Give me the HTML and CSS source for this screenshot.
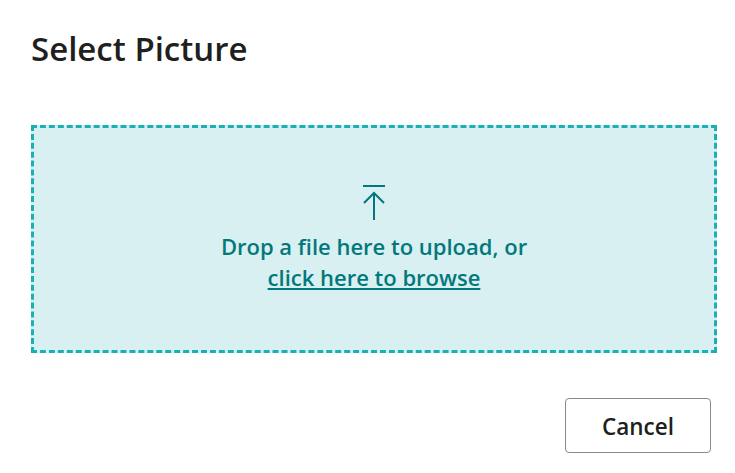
FILE: index.html
```html
<!DOCTYPE html>
<html lang="en">
  <head>
    <meta charset="UTF-8" />
    <meta name="viewport" content="width=device-width, initial-scale=1.0" />
    <title>Select Picture</title>
    <link rel="stylesheet" href="styles.css">
  </head>
  <body>
    <div class="dialog">
      <h2 class="dialog-title">Select Picture</h2>

      <div class="drop-zone">
        <svg class="upload-icon" width="24" height="36" viewBox="0 0 24 36">
          <line x1="1" y1="1" x2="23" y2="1" stroke="currentColor" stroke-width="2" />
          <line x1="12" y1="8" x2="12" y2="35" stroke="currentColor" stroke-width="2" />
          <polyline points="2,18 12,8 22,18" fill="none" stroke="currentColor" stroke-width="2" />
        </svg>
        <p class="drop-text">Drop a file here to upload, or</p>
        <a href="#" class="browse-link">click here to browse</a>
      </div>

      <div class="actions">
        <button type="button" class="btn-cancel">Cancel</button>
      </div>
    </div>
  </body>
</html>
```

FILE: styles.css
```css
/* General styles */
body {
  font-family: "Open Sans", "Noto Sans", sans-serif;
  background-color: white;
  margin: 0;
  padding: 0;
}

.dialog {
  padding: 27px 18px 20px 31px;
}

.dialog-title {
  margin: 0;
  font-size: 33px;
  font-weight: 600;
  line-height: 44px;
  color: #201f1e;
}

.drop-zone {
  margin-top: 54px;
  height: 222px;
  border: 3px dashed #1ab1b6;
  background-color: #d8f0f2;
  display: flex;
  flex-direction: column;
  align-items: center;
  justify-content: center;
  color: #03787c;
}

.upload-icon {
  margin-bottom: 10px;
}

.drop-text {
  margin: 0;
  font-size: 22px;
  font-weight: 600;
  line-height: 31px;
}

.browse-link {
  color: #03787c;
  font-size: 22px;
  font-weight: 600;
  line-height: 31px;
  text-decoration: underline;
}

.actions {
  display: flex;
  justify-content: flex-end;
  margin-top: 45px;
  padding-right: 6px;
}

.btn-cancel {
  width: 146px;
  height: 55px;
  padding-top: 3px;
  background-color: white;
  border: 1px solid #8a8886;
  border-radius: 4px;
  font-family: "Open Sans", "Noto Sans", sans-serif;
  font-size: 22.5px;
  font-weight: 600;
  color: #201f1e;
  cursor: pointer;
}
```
